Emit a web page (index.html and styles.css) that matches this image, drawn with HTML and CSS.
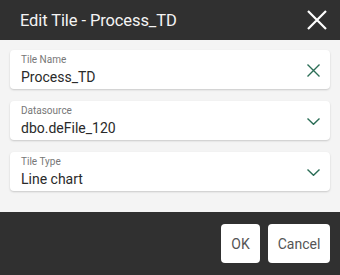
FILE: index.html
```html
<!DOCTYPE html>
<html>
<head>
<meta charset="utf-8">
<link rel="stylesheet" href="styles.css">
</head>
<body>
<div class="dialog">
  <header class="head">
    <span class="title">Edit Tile - Process_TD</span>
    <button class="close" aria-label="Close">
      <svg width="20" height="20" viewBox="0 0 20 20"><path d="M1 1L19 19M19 1L1 19" stroke="#fff" stroke-width="2.2" fill="none"/></svg>
    </button>
  </header>
  <main class="body">
    <div class="field">
      <div class="texts">
        <div class="label">Tile Name</div>
        <div class="value">Process_TD</div>
      </div>
      <svg class="icon" width="13" height="13" viewBox="0 0 13 13"><path d="M0.5 0.5L12.5 12.5M12.5 0.5L0.5 12.5" stroke="#2c6e57" stroke-width="1.4" fill="none"/></svg>
    </div>
    <div class="field">
      <div class="texts">
        <div class="label">Datasource</div>
        <div class="value">dbo.deFile_120</div>
      </div>
      <svg class="icon" width="13" height="7" viewBox="0 0 13 7"><path d="M0.5 0.5L6.5 6.3L12.5 0.5" stroke="#2c6e57" stroke-width="1.4" fill="none"/></svg>
    </div>
    <div class="field">
      <div class="texts">
        <div class="label">Tile Type</div>
        <div class="value">Line chart</div>
      </div>
      <svg class="icon" width="13" height="7" viewBox="0 0 13 7"><path d="M0.5 0.5L6.5 6.3L12.5 0.5" stroke="#2c6e57" stroke-width="1.4" fill="none"/></svg>
    </div>
  </main>
  <footer class="foot">
    <button class="btn ok">OK</button>
    <button class="btn">Cancel</button>
  </footer>
</div>
</body>
</html>
```
FILE: styles.css
```css
* { box-sizing: border-box; }
html, body { margin: 0; padding: 0; }
body {
  width: 340px;
  height: 275px;
  font-family: Roboto, "Liberation Sans", sans-serif;
  background: #303030;
}
.dialog { display: flex; flex-direction: column; height: 275px; }
.head {
  height: 40px;
  background: #303030;
  display: flex;
  align-items: center;
  justify-content: space-between;
  padding: 0 13px 0 20px;
}
.title { color: #f4f4f4; font-size: 16.5px; letter-spacing: -0.1px; }
.close {
  background: none; border: 0; padding: 0; margin: 0;
  width: 20px; height: 20px; display: flex;
}
.body {
  background: #f4f4f4;
  padding: 10px 10px 21px;
  display: flex;
  flex-direction: column;
  gap: 12px;
}
.field {
  background: #fff;
  border-radius: 4px;
  height: 39px;
  box-shadow: 0 1px 2px rgba(0,0,0,0.18);
  display: flex;
  align-items: center;
  padding: 0 10px 0 11px;
}
.texts { flex: 1; display: flex; flex-direction: column; align-self: flex-start; padding-top: 4px; }
.label { font-size: 10px; color: #777; line-height: 12px; }
.value { font-size: 14px; color: #2a2a2a; line-height: 18px; margin-top: 2px; }
.icon { flex: none; margin-top: 1px; }
.foot {
  flex: 1;
  display: flex;
  justify-content: flex-end;
  align-items: flex-start;
  gap: 8px;
  padding: 12px 10px 0;
}
.btn {
  background: #fff;
  border: 0;
  border-radius: 4px;
  height: 39px;
  font-family: inherit;
  font-size: 14px;
  color: #555;
  padding: 0;
  width: 62px;
}
.btn.ok { width: 39px; }
```
